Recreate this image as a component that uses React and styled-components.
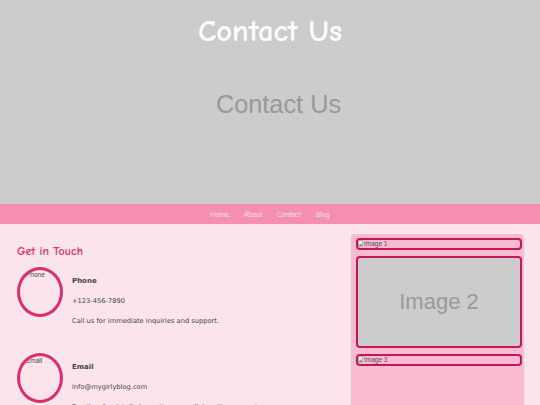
import React from "react";
import styled, { createGlobalStyle } from "styled-components";

const comic = `"Comic Sans MS", "Comic Neue", cursive`;

const GlobalStyle = createGlobalStyle`
  html, body { margin: 0; padding: 0; }
  body { background: #fce4ec; font-family: "DejaVu Sans", Verdana, sans-serif; }
`;

const Hero = styled.header`
  height: 204px;
  background: #cccccc;
  display: flex;
  flex-direction: column;
  align-items: center;
`;

const HeroTitle = styled.h1`
  margin: 12px 0 0;
  font-family: ${comic};
  font-size: 30.5px;
  font-weight: bold;
  line-height: 40px;
  color: #ffffff;
`;

const HeroImage = styled.div`
  margin-top: 37px;
  padding-left: 17px;
  font-family: "Liberation Sans", Arial, sans-serif;
  font-size: 25.3px;
  line-height: 30px;
  color: #999999;
`;

const Nav = styled.nav`
  height: 20px;
  background: #f48fb1;
  display: flex;
  justify-content: center;
  align-items: center;
  gap: 15px;
`;

const NavLink = styled.a`
  font-family: ${comic};
  font-size: 7.3px;
  color: #fff0f5;
  text-decoration: none;
`;

const Main = styled.main`
  display: grid;
  grid-template-columns: 1fr 173px;
  gap: 16px;
  padding: 10px 16px 0 17px;
`;

const Left = styled.section``;

const Heading = styled.h2`
  margin: 9px 0 8px;
  font-family: ${comic};
  font-size: 12px;
  font-weight: bold;
  line-height: 16px;
  color: #e0306a;
`;

const Item = styled.div`
  display: flex;
  align-items: flex-start;
  gap: 9px;
  margin-bottom: 28px;
`;

const Circle = styled.div`
  flex: none;
  box-sizing: content-box;
  width: 34px;
  height: 43px;
  padding: 1px 0 0 6px;
  border: 3px solid #dc2d6c;
  border-radius: 50%;
  overflow: hidden;
  font-family: "Liberation Sans", Arial, sans-serif;
  font-size: 6.5px;
  line-height: 8px;
  color: #444;
`;

const Info = styled.div`
  padding-top: 10px;
  color: #444;
`;

const Title = styled.div`
  font-size: 7px;
  font-weight: bold;
  line-height: 8px;
  margin-bottom: 12px;
`;

const Line = styled.div`
  font-size: 6.7px;
  line-height: 8px;
  white-space: nowrap;
  & + & { margin-top: 12px; }
`;

const Sidebar = styled.aside`
  background: #f8bbd0;
  border-radius: 4px;
  padding: 4px 2px 4px 5px;
  min-height: 180px;
`;

const Pic = styled.div`
  border: 2px solid #c2185b;
  border-radius: 4px;
  height: ${(p) => p.$h}px;
  margin-bottom: 6px;
  background: ${(p) => (p.$filled ? "#cccccc" : "transparent")};
  display: flex;
  align-items: ${(p) => (p.$filled ? "center" : "flex-start")};
  justify-content: ${(p) => (p.$filled ? "center" : "flex-start")};
  font-family: "Liberation Sans", Arial, sans-serif;
  font-size: ${(p) => (p.$filled ? "22px" : "6.5px")};
  line-height: ${(p) => (p.$filled ? "26px" : "8px")};
  color: ${(p) => (p.$filled ? "#999999" : "#555555")};
  overflow: hidden;
`;

const Broken = () => (
  <svg width="5" height="7" viewBox="0 0 5 7" style={{ marginRight: 1, flex: "none" }}>
    <rect x="0.5" y="0.5" width="4" height="6" fill="#eee" stroke="#999" strokeWidth="0.6" />
    <path d="M1 5.5 L2.2 3.6 L3.2 4.8 L4 4 L4 6 L1 6Z" fill="#6a6" />
  </svg>
);

const contacts = [
  { alt: "Phone", title: "Phone", value: "+123-456-7890", desc: "Call us for immediate inquiries and support." },
  { alt: "Email", title: "Email", value: "info@mygirlyblog.com", desc: "Email us for detailed questions or collaboration requests." },
];

export default function App() {
  return (
    <>
      <GlobalStyle />
      <Hero>
        <HeroTitle>Contact Us</HeroTitle>
        <HeroImage>Contact Us</HeroImage>
      </Hero>
      <Nav>
        <NavLink href="#">Home</NavLink>
        <NavLink href="#">About</NavLink>
        <NavLink href="#">Contact</NavLink>
        <NavLink href="#">Blog</NavLink>
      </Nav>
      <Main>
        <Left>
          <Heading>Get in Touch</Heading>
          {contacts.map((c) => (
            <Item key={c.title}>
              <Circle>{c.alt}</Circle>
              <Info>
                <Title>{c.title}</Title>
                <Line>{c.value}</Line>
                <Line>{c.desc}</Line>
              </Info>
            </Item>
          ))}
        </Left>
        <Sidebar>
          <Pic $h={8}><Broken />Image 1</Pic>
          <Pic $h={88} $filled>Image 2</Pic>
          <Pic $h={8}><Broken />Image 3</Pic>
        </Sidebar>
      </Main>
    </>
  );
}
